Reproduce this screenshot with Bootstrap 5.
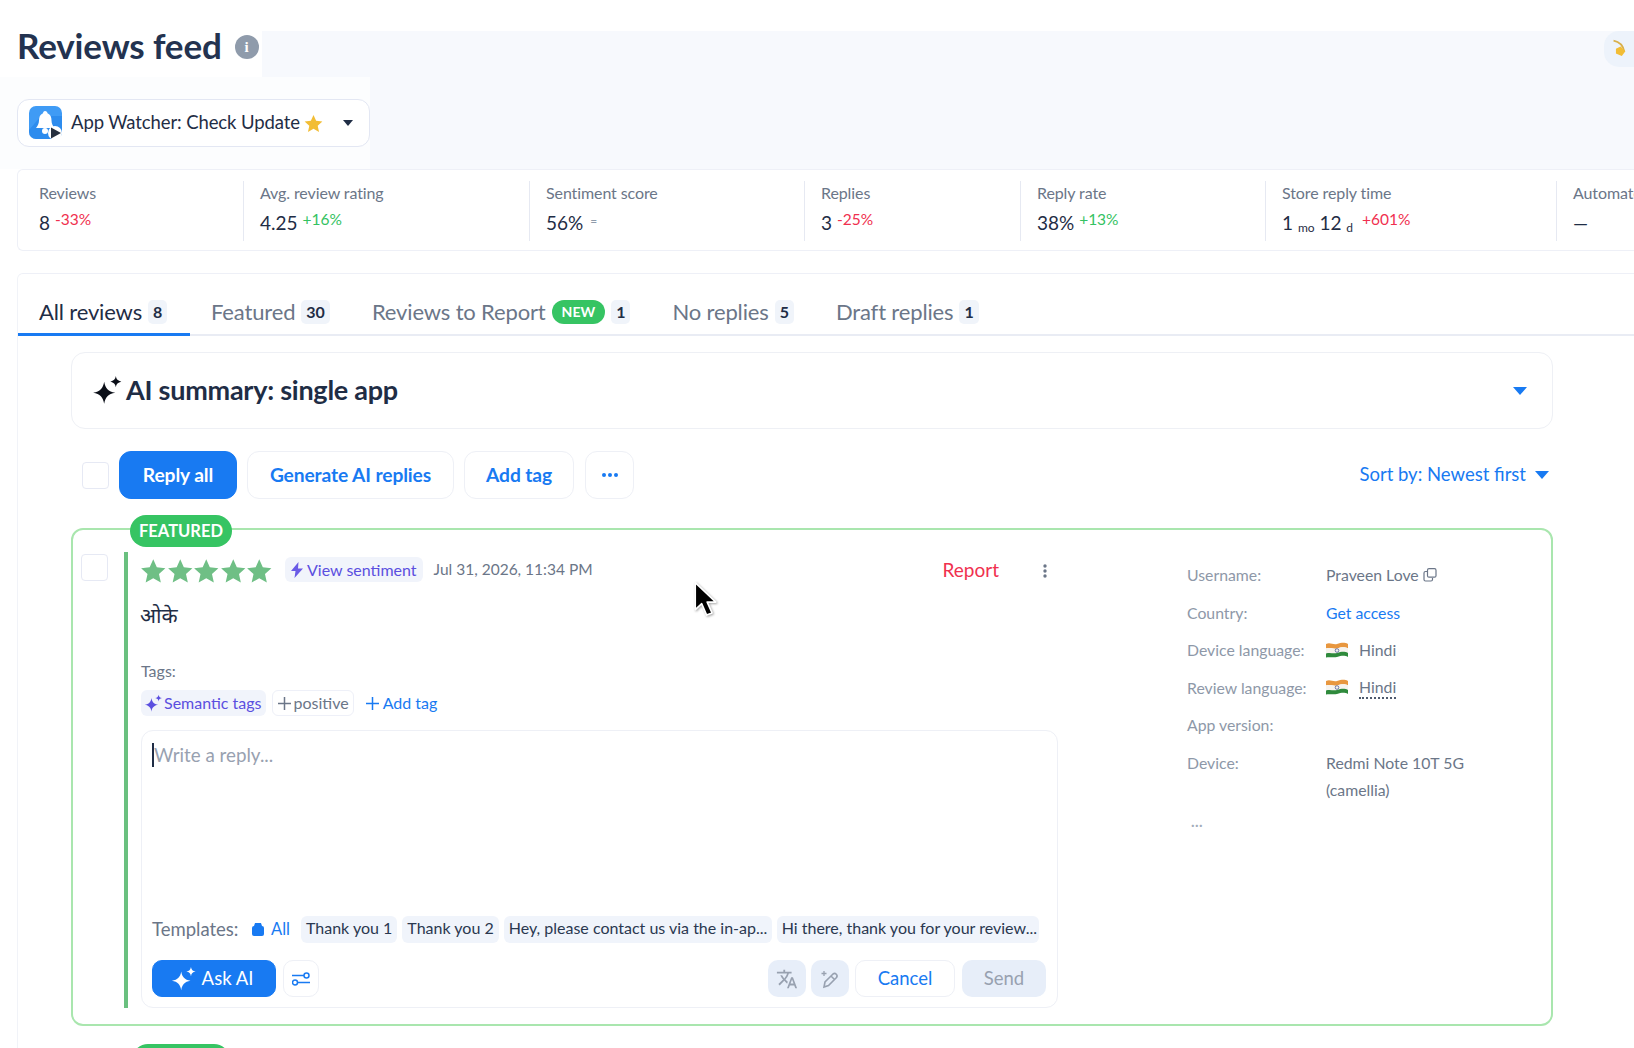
<!DOCTYPE html>
<html lang="en">
<head>
    <meta charset="utf-8">
    <meta name="viewport" content="width=device-width, initial-scale=1">
    <title>Reviews feed</title>
    <link href="https://cdn.jsdelivr.net/npm/bootstrap@5.3.3/dist/css/bootstrap.min.css" rel="stylesheet"/>
    <style>
        html, body { height: 100%; }
        body {
            font-family: Lato, "Noto Sans", "Noto Sans Devanagari", sans-serif;
            color: #1f2d45;
            background: #fff;
            width: 1634px;
            height: 1048px;
            overflow: hidden;
            position: relative;
        }
        .top-band { margin-top: 31px; height: 138px; background: #f7f9fd; }
        .left-head { width: 370px; }
        .title-row { height: 46px; padding-left: 17px; background: #fff; width: 262px; }
        .title-row h1 { font-size: 35px; line-height: 28px; font-weight: 700; margin: 0; letter-spacing: -.15px; color: #233350; }
        .info-dot { width: 24px; height: 24px; margin-top: 4px; border-radius: 50%; background: #8f9bab; color: #fff; font: 700 15px "Liberation Serif", serif; margin-left: 13px; }
        .pick-wrap { height: 92px; background: #fcfdfe; padding-top: 22px; }
        .app-pick { margin-left: 17px; width: 353px; height: 48px; background: #fff; border: 1px solid #e3e7f3; border-radius: 12px; padding: 0 16px 0 11px; font-size: 18.5px; }
        .app-pick .app-name { margin-left: 8px; letter-spacing: -.1px; }
        .mini-caret { width: 0; height: 0; border-left: 5.5px solid transparent; border-right: 5.5px solid transparent; border-top: 6px solid #1f2d45; }
        .bubble { width: 30px; height: 36px; background: #edf3fb; border-radius: 15px 0 0 15px; padding: 5px 0 0 6px; overflow: hidden; }

        .stats-strip { display: grid; grid-template-columns: 225px 286px 275px 216px 245px 291px 200px; margin-left: 17px; height: 82px; border: 1px solid #eef0f7; border-right: 0; border-radius: 6px 0 0 6px; padding-top: 11px; overflow: hidden; }
        .stat-cell { padding-left: 16px; height: 60px; border-left: 1px solid #e6e9f2; white-space: nowrap; }
        .stat-cell:first-child { border-left: 0; padding-left: 21px; }
        .stat-label { font-size: 16px; line-height: 22px; margin-top: 1px; color: #6b7688; letter-spacing: -.1px; }
        .stat-val { font-size: 19px; line-height: 26px; margin-top: 6px; color: #1f2d45; }
        .stat-val sub { font-size: 12px; bottom: -.2em; }
        .delta { font-size: 15.5px; position: relative; top: -5px; }
        .delta-up { color: #34c262; }
        .delta-down { color: #f0304f; }
        .delta-flat { color: #8f9bab; font-size: 12px; margin-left: 2px; }

        .main-panel { margin: 22px 0 0 17px; border-top: 1px solid #eef0f7; border-left: 1px solid #f1f3f8; border-radius: 6px 0 0 0; height: 800px; }
        .tab-row { border-bottom: 2px solid #e9ecf4; height: 62px; flex-wrap: nowrap; }
        .tab-row .nav-link { color: #6b7688; font-size: 22px; line-height: 26px; padding: 24px 21px 10px; height: 62px; display: flex; align-items: center; gap: 6px; white-space: nowrap; letter-spacing: -.15px; }
        .tab-row .nav-link.active { color: #1f2d45; border-bottom: 3px solid #187af2; padding-bottom: 7px; width: 172px; }
        .tab-count { background: #f0f4fa; color: #1f2d45; font-size: 16px; font-weight: 700; padding: 2px 5px; border-radius: 5px; line-height: 20px; min-width: 18px; text-align: center; letter-spacing: 0; }
        .new-pill { background: #36c463; color: #fff; font-size: 14px; font-weight: 700; padding: 4px 10px; line-height: 16px; letter-spacing: 0; }

        .content-col { margin-left: 53px; width: 1482px; }
        .ai-box { margin-top: 16px; height: 77px; border: 1px solid #eef0f5; border-radius: 14px; padding: 0 25px 0 20px; }
        .ai-box h2 { font-size: 27px; font-weight: 700; margin: 0 0 0 3px; letter-spacing: -.25px; }
        .blue-caret { width: 0; height: 0; border-left: 7px solid transparent; border-right: 7px solid transparent; border-top: 8px solid #187af2; }

        .tool-row { margin-top: 22px; height: 48px; padding-left: 11px; }
        .tick { width: 27px; height: 27px; margin: 0; border: 1px solid #e6e9f4; border-radius: 6px; flex: none; }
        .btn-fill, .btn-ghost { height: 48px; font-size: 19.2px; font-weight: 700; border-radius: 12px; padding: 0; letter-spacing: -.1px; }
        .btn-fill { background: #187af2; border-color: #187af2; color: #fff; }
        .btn-ghost { background: #fff; border: 1px solid #eef0f6; color: #187af2; }
        .w-reply { width: 118px; margin-left: 10px; }
        .w-gen { width: 207px; margin-left: 10px; }
        .w-add { width: 110px; margin-left: 10px; }
        .w-more { width: 49px; margin-left: 11px; }
        .sort-link { color: #187af2; font-size: 18.5px; text-decoration: none; gap: 9px; margin-right: 4px; }

        .feat-card { position: relative; margin-top: 29px; height: 498px; border: 2px solid #a9e6ae; border-radius: 12px; padding: 22px 0 16px 8px; }
        .feat-flag { position: absolute; left: 57px; top: -15px; width: 102px; height: 32px; background: #36c463; color: #fff; font-size: 16.5px; font-weight: 700; border-radius: 16px; }
        .next-flag { position: absolute; left: 59px; top: 514px; width: 98px; height: 32px; background: #36c463; border-radius: 16px; }
        .feat-card .tick { margin-top: 2px; }
        .green-rule { width: 4px; background: #6ac07f; margin: 0 13px 0 16px; flex: none; }
        .review-col { width: 917px; flex: none; }
        .head-row { height: 25px; margin-top: 6px; }
        .star-set { margin-left: -1px; width: 132px; }
        .star-set svg { width: 26.500px; flex: none; }
        .soft-chip { background: #f1f4fb; border-radius: 6px; font-size: 16px; height: 25px; padding: 0 6px; color: #5b4fe0; gap: 4px; white-space: nowrap; }
        .head-row .soft-chip { margin-top: -2px; margin-left: 5px; }
        .when { color: #6b7688; font-size: 15.5px; margin-left: 11px; margin-top: -1px; }
        .report-link { color: #f0304f; font-size: 19px; text-decoration: none; margin-left: auto; }
        .kebab { margin: 0 11px 0 44px; }
        .review-text { font-size: 21px; line-height: 30px; margin-top: 17px; margin-left: -1px; }
        .tags-label { color: #6b7688; font-size: 16px; line-height: 24px; margin-top: 29px; }
        .tag-row { margin-top: 7px; height: 26px; font-size: 16px; }
        .tag-outline { border: 1px solid #eef0f8; border-radius: 6px; height: 26px; padding: 0 4px 0 5px; color: #6b7688; margin-left: 6px; gap: 3px; }
        .tag-add { color: #187af2; text-decoration: none; margin-left: 12px; gap: 4px; }
        .tag-row .soft-chip { height: 26px; padding: 0 4px 0 3px; gap: 1px; }

        .reply-box { margin-top: 14px; height: 278px; border: 1px solid #eef0f6; border-radius: 12px; padding: 0 11px 10px 10px; }
        .reply-hint { color: #98a1b0; font-size: 18.800px; line-height: 24px; margin-top: 12px; border-left: 2px solid #1f2d45; }
        .tpl-row { height: 27px; margin-bottom: 17px; }
        .tpl-label { color: #6b7688; font-size: 18.5px; width: 100px; flex: none; }
        .tpl-all { color: #187af2; font-size: 16.5px; text-decoration: none; gap: 7px; width: 49px; flex: none; }
        .tpl-chip { background: #f0f4fb; border-radius: 6px; height: 27px; padding: 0 5px 3px; font-size: 16px; color: #2a3850; margin-right: 5px; white-space: nowrap; overflow: hidden; flex: none; }
        .tpl-long-a { width: 268px; }
        .tpl-long-b { width: 262px; margin-right: 0; padding-right: 0; }
        .act-row { height: 37px; }
        .btn-ask { height: 37px; width: 124px; background: #187af2; border-color: #187af2; color: #fff; border-radius: 10px; font-size: 18.5px; padding: 0 4px 0 0; gap: 5px; }
        .btn-tune { height: 37px; width: 36px; background: #fff; border: 1px solid #eef0f6; border-radius: 10px; padding: 0; margin-left: 7px; }
        .btn-mute { height: 37px; width: 38px; background: #e7eef9; border: 0; border-radius: 10px; padding: 0; margin-left: 5px; }
        .btn-cancel { height: 37px; width: 100px; background: #fff; border: 1px solid #eef0f6; border-radius: 10px; color: #187af2; font-size: 18.5px; padding: 0; margin-left: 6px; }
        .btn-send { height: 37px; width: 84px; background: #e7eef9; border: 0; border-radius: 10px; color: #98a1b0; font-size: 18.5px; padding: 0; margin-left: 7px; }

        .meta-col { margin-left: 129px; width: 300px; font-size: 15.8px; margin-top: 9px; color: #6b7688; }
        .meta-line { display: flex; line-height: 27px; margin-bottom: 10.6px; }
        .meta-line .meta-key { width: 139px; color: #8e98a8; flex: none; }
        .meta-link { color: #187af2; text-decoration: none; }
        .dotted-word { border-bottom: 2px dotted #4f5a6d; line-height: 21px; }
        .flag-gap { margin-right: 11px; }
        .meta-more { color: #a3acba; font-size: 15px; font-weight: 700; line-height: 14px; margin: 4px 0 0 4px; letter-spacing: .5px; }
        .mouse-arrow { position: absolute; left: 692px; top: 580px; filter: drop-shadow(1px 1px 1px rgba(0,0,0,.35)); }
    </style>
</head>
<body>
<svg width="0" height="0" class="position-absolute">
    <defs>
        <symbol id="star5" viewBox="0 0 24 24"><path d="M12 1.2l3.3 7.3 7.9.9-5.9 5.3 1.7 7.9-7-4-7 4 1.7-7.9L.8 9.4l7.9-.9z"/></symbol>
        <symbol id="spark" viewBox="0 0 28 28"><path d="M11 6c1 6 3.600 8.900 10 10-6.400 1.100-9 4-10 10-1-6-3.600-8.900-10-10 6.400-1.100 9-4 10-10z"/><path d="M21.500 1c.5 3 1.800 4.400 5 5-3.200.6-4.500 2-5 5-.5-3-1.800-4.400-5-5 3.200-.6 4.500-2 5-5z"/></symbol>
        <symbol id="flag-in" viewBox="0 0 22 16"><path fill="#e8973f" d="M0 2c4-2 7 1 11 0s7-2 11 0v4.500c-4-2-7-1-11 0S4 5 0 6.500z"/><path fill="#f6f3ee" d="M0 6.500c4-1.500 7 1 11 0s7-2 11 0V11c-4-2-7-1-11 0s-7-1-11 .5z"/><path fill="#2f8a3c" d="M0 11.500c4-1.500 7 .5 11-.5s7-2 11 0v4c-4-2-7-1-11 0s-7-.5-11 .5z"/><circle cx="11" cy="8.500" r="1.800" fill="none" stroke="#3b4a8f" stroke-width=".7"/></symbol>
    </defs>
</svg>

<div class="top-band d-flex justify-content-between">
    <div class="left-head">
        <div class="title-row d-flex align-items-start">
            <h1>Reviews feed</h1>
            <span class="info-dot d-flex align-items-center justify-content-center">i</span>
        </div>
        <div class="pick-wrap">
            <div class="app-pick d-flex align-items-center">
                <svg width="34" height="34" viewBox="0 0 34 34">
                    <rect width="33" height="33" rx="7" fill="#3f9bf5"/>
                    <path d="M0 24L12 10l21 0V26a7 7 0 0 1-7 7H7a7 7 0 0 1-7-7z" fill="#1f7fe8" opacity=".55"/>
                    <path d="M16 5c1.500 0 2.500 1 2.500 2.300 3 1.200 4 4 4 7.200 0 3.500 1.500 5.500 3 7.500H7c1.500-2 3-4 3-7.500 0-3.200 1-6 4-7.200C14 6 14.800 5 16 5z" fill="#fff"/>
                    <circle cx="16" cy="25" r="3" fill="#fff"/>
                    <circle cx="26" cy="27" r="7" fill="#fff"/>
                    <path d="M22 21.500l10 5.500-10 5.500z" fill="#26303f"/>
                </svg>
                <span class="app-name">App Watcher: Check Update</span>
                <svg class="ms-1" width="19" height="19" fill="#f2bd35"><use href="#star5"/></svg>
                <span class="mini-caret ms-auto"></span>
            </div>
        </div>
    </div>
    <div class="bubble">
        <svg width="26" height="26" viewBox="0 0 22 22"><path d="M3 3c5 1 8 4 9 9" fill="none" stroke="#d9b04a" stroke-width="1.500"/><path d="M5 10l4-2 4 4-3 4-5-2z" fill="#f2bd35"/></svg>
    </div>
</div>

<div class="stats-strip">
    <div class="stat-cell"><div class="stat-label">Reviews</div><div class="stat-val">8 <span class="delta delta-down">-33%</span></div></div>
    <div class="stat-cell"><div class="stat-label">Avg. review rating</div><div class="stat-val">4.25 <span class="delta delta-up">+16%</span></div></div>
    <div class="stat-cell"><div class="stat-label">Sentiment score</div><div class="stat-val">56% <span class="delta delta-flat">=</span></div></div>
    <div class="stat-cell"><div class="stat-label">Replies</div><div class="stat-val">3 <span class="delta delta-down">-25%</span></div></div>
    <div class="stat-cell"><div class="stat-label">Reply rate</div><div class="stat-val">38% <span class="delta delta-up">+13%</span></div></div>
    <div class="stat-cell"><div class="stat-label">Store reply time</div><div class="stat-val">1 <sub>mo</sub> 12 <sub>d</sub> <span class="delta delta-down ms-1">+601%</span></div></div>
    <div class="stat-cell"><div class="stat-label">Automated</div><div class="stat-val">—</div></div>
</div>

<div class="main-panel">
    <ul class="nav tab-row">
        <li class="nav-item"><a class="nav-link active" href="#">All reviews <span class="tab-count">8</span></a></li>
        <li class="nav-item"><a class="nav-link" href="#">Featured <span class="tab-count">30</span></a></li>
        <li class="nav-item"><a class="nav-link" href="#">Reviews to Report <span class="badge rounded-pill new-pill">NEW</span> <span class="tab-count">1</span></a></li>
        <li class="nav-item"><a class="nav-link" href="#">No replies <span class="tab-count">5</span></a></li>
        <li class="nav-item"><a class="nav-link" href="#">Draft replies <span class="tab-count">1</span></a></li>
    </ul>

    <div class="content-col">
        <div class="ai-box d-flex align-items-center justify-content-between">
            <div class="d-flex align-items-center">
                <svg width="31" height="31" fill="#0b0f18"><use href="#spark"/></svg>
                <h2>AI summary: single app</h2>
            </div>
            <span class="blue-caret"></span>
        </div>

        <div class="tool-row d-flex align-items-center">
            <input class="form-check-input tick" type="checkbox" aria-label="Select all">
            <button class="btn btn-fill w-reply">Reply all</button>
            <button class="btn btn-ghost w-gen">Generate AI replies</button>
            <button class="btn btn-ghost w-add">Add tag</button>
            <button class="btn btn-ghost w-more d-flex align-items-center justify-content-center">
                <svg width="18" height="4"><circle cx="3" cy="2" r="2" fill="#187af2"/><circle cx="9" cy="2" r="2" fill="#187af2"/><circle cx="15" cy="2" r="2" fill="#187af2"/></svg>
            </button>
            <a class="sort-link d-flex align-items-center ms-auto" href="#">Sort by: Newest first <span class="blue-caret"></span></a>
        </div>

        <div class="feat-card d-flex">
            <span class="feat-flag d-flex align-items-center justify-content-center">FEATURED</span>
            <span class="next-flag"></span>
            <input class="form-check-input tick" type="checkbox" aria-label="Select review">
            <div class="green-rule"></div>
            <div class="review-col">
                <div class="head-row d-flex align-items-center">
                    <span class="d-flex star-set me-2">
                        <svg height="26" fill="#6fbf85"><use href="#star5"/></svg>
                        <svg height="26" fill="#6fbf85"><use href="#star5"/></svg>
                        <svg height="26" fill="#6fbf85"><use href="#star5"/></svg>
                        <svg height="26" fill="#6fbf85"><use href="#star5"/></svg>
                        <svg height="26" fill="#6fbf85"><use href="#star5"/></svg>
                    </span>
                    <span class="soft-chip d-flex align-items-center">
                        <svg width="12" height="16" viewBox="0 0 12 16" fill="#6a5be6"><path d="M7.500 0L0 9h4.500L3.500 16 12 6.500H7z"/></svg>
                        View sentiment
                    </span>
                    <span class="when">Jul 31, 2026, 11:34 PM</span>
                    <a class="report-link" href="#">Report</a>
                    <svg class="kebab" width="4" height="14"><circle cx="2" cy="2" r="1.700" fill="#6b7688"/><circle cx="2" cy="7" r="1.700" fill="#6b7688"/><circle cx="2" cy="12" r="1.700" fill="#6b7688"/></svg>
                </div>
                <div class="review-text">ओके</div>
                <div class="tags-label">Tags:</div>
                <div class="tag-row d-flex align-items-center">
                    <span class="soft-chip d-flex align-items-center">
                        <svg width="19" height="19" fill="#5b4fe0"><use href="#spark"/></svg>
                        Semantic tags
                    </span>
                    <span class="tag-outline d-flex align-items-center">
                        <svg width="13" height="13"><path d="M6.500 0v13M0 6.500h13" stroke="#6b7688" stroke-width="1.500"/></svg>
                        positive
                    </span>
                    <a class="tag-add d-flex align-items-center" href="#">
                        <svg width="13" height="13"><path d="M6.500 0v13M0 6.500h13" stroke="#187af2" stroke-width="1.500"/></svg>
                        Add tag
                    </a>
                </div>

                <div class="reply-box d-flex flex-column">
                    <div class="flex-grow-1"><span class="reply-hint d-inline-block">Write a reply...</span></div>
                    <div class="tpl-row d-flex align-items-center">
                        <span class="tpl-label">Templates:</span>
                        <a class="tpl-all d-flex align-items-center" href="#">
                            <svg width="12" height="13" viewBox="0 0 12 13" fill="#187af2"><path d="M3 0h6l1 3H2z"/><rect y="3" width="12" height="10" rx="2"/></svg>
                            All
                        </a>
                        <span class="tpl-chip d-flex align-items-center">Thank you 1</span>
                        <span class="tpl-chip d-flex align-items-center">Thank you 2</span>
                        <span class="tpl-chip d-flex align-items-center tpl-long-a">Hey, please contact us via the in-ap...</span>
                        <span class="tpl-chip d-flex align-items-center tpl-long-b">Hi there, thank you for your review...</span>
                    </div>
                    <div class="act-row d-flex align-items-center">
                        <button class="btn btn-ask d-flex align-items-center justify-content-center">
                            <svg width="26" height="26" fill="#fff"><use href="#spark"/></svg>
                            Ask AI
                        </button>
                        <button class="btn btn-tune d-flex align-items-center justify-content-center">
                            <svg width="18" height="14" viewBox="0 0 18 14" fill="none" stroke="#187af2" stroke-width="1.500"><path d="M0 3.500h12M6 10.500h12"/><circle cx="14.500" cy="3.500" r="2.500"/><circle cx="3" cy="10.500" r="2.500"/></svg>
                        </button>
                        <button class="btn btn-mute d-flex align-items-center justify-content-center ms-auto">
                            <svg width="22" height="22" viewBox="0 0 24 24" fill="#98a1b0"><path d="M12.870 15.070l-2.540-2.510.03-.03c1.740-1.940 2.980-4.170 3.710-6.530H17V4h-7V2H8v2H1v1.990h11.170C11.500 7.920 10.440 9.750 9 11.350 8.070 10.320 7.300 9.190 6.690 8h-2c.73 1.630 1.730 3.170 2.980 4.560l-5.090 5.020L4 19l5-5 3.110 3.110.76-2.040zM18.500 10h-2L12 22h2l1.120-3h4.750L21 22h2l-4.500-12zm-2.620 7l1.620-4.330L19.120 17h-3.240z"/></svg>
                        </button>
                        <button class="btn btn-mute d-flex align-items-center justify-content-center">
                            <svg width="20" height="20" viewBox="0 0 20 20" fill="none" stroke="#98a1b0" stroke-width="1.600"><path d="M4 18l1-5 8-8a2.500 2.500 0 0 1 3.500 3.500l-8 8zM11 7l3.500 3.500"/><path d="M4 2v5M1.500 4.500h5" stroke-width="1.300"/></svg>
                        </button>
                        <button class="btn btn-cancel">Cancel</button>
                        <button class="btn btn-send">Send</button>
                    </div>
                </div>
            </div>

            <div class="meta-col">
                <div class="meta-line"><span class="meta-key">Username:</span><span class="d-flex align-items-center">Praveen Love
                    <svg class="ms-1" width="14" height="14" viewBox="0 0 14 14" fill="none" stroke="#6b7688" stroke-width="1.200"><rect x="4.500" y=".7" width="8.500" height="8.500" rx="1.500"/><path d="M4 3.500H2.500A1.500 1.500 0 0 0 1 5v6.500A1.500 1.500 0 0 0 2.500 13H8a1.500 1.500 0 0 0 1.500-1.500V10"/></svg></span></div>
                <div class="meta-line"><span class="meta-key">Country:</span><a class="meta-link" href="#">Get access</a></div>
                <div class="meta-line"><span class="meta-key">Device language:</span><span class="d-flex align-items-center"><svg class="flag-gap" width="22" height="16"><use href="#flag-in"/></svg>Hindi</span></div>
                <div class="meta-line"><span class="meta-key">Review language:</span><span class="d-flex align-items-center"><svg class="flag-gap" width="22" height="16"><use href="#flag-in"/></svg><span class="dotted-word">Hindi</span></span></div>
                <div class="meta-line"><span class="meta-key">App version:</span></div>
                <div class="meta-line"><span class="meta-key">Device:</span><span>Redmi Note 10T 5G<br>(camellia)</span></div>
                <div class="meta-more">...</div>
            </div>
        </div>
    </div>
</div>

<svg class="mouse-arrow" width="26" height="42" viewBox="0 0 24 38">
    <path d="M3 2v25l6-5.500 4.500 10.500 5-2-4.500-10H22z" fill="#000" stroke="#fff" stroke-width="1.500" stroke-linejoin="round"/>
</svg>

<script src="https://cdn.jsdelivr.net/npm/bootstrap@5.3.3/dist/js/bootstrap.bundle.min.js"></script>
</body>
</html>
